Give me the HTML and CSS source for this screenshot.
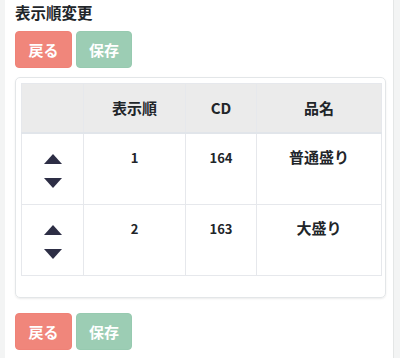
FILE: index.html
```html
<!DOCTYPE html>
<html lang="ja">
<head>
<meta charset="utf-8">
<link rel="stylesheet" href="styles.css">
</head>
<body>
<div class="page">
  <h1 class="title">表示順変更</h1>
  <div class="actions">
    <button class="btn btn-back">戻る</button>
    <button class="btn btn-save">保存</button>
  </div>
  <div class="card">
    <table class="grid">
      <colgroup>
        <col class="c1"><col class="c2"><col class="c3"><col class="c4">
      </colgroup>
      <thead>
        <tr><th></th><th>表示順</th><th>CD</th><th>品名</th></tr>
      </thead>
      <tbody>
        <tr>
          <td class="move"><div class="arrows"><span class="tri up"></span><span class="tri down"></span></div></td>
          <td>1</td><td>164</td><td class="name">普通盛り</td>
        </tr>
        <tr>
          <td class="move"><div class="arrows"><span class="tri up"></span><span class="tri down"></span></div></td>
          <td>2</td><td>163</td><td class="name">大盛り</td>
        </tr>
      </tbody>
    </table>
  </div>
  <div class="actions">
    <button class="btn btn-back">戻る</button>
    <button class="btn btn-save">保存</button>
  </div>
</div>
</body>
</html>
```
FILE: styles.css
```css
html, body {
  margin: 0;
  padding: 0;
  height: 100%;
}
body {
  background: #f3f4f4;
  padding: 0 6px 0 5px;
  box-sizing: border-box;
  font-family: "Noto Sans CJK JP", "Noto Sans", sans-serif;
  color: #212529;
}
.page {
  background: #fff;
  height: 100%;
  box-sizing: border-box;
  border-right: 1px solid #e4e6e6;
  padding: 1px 6px 0 10px;
}
.title {
  font-size: 15.5px;
  line-height: 22px;
  font-weight: 700;
  margin: 0 0 8px 0;
}
.actions {
  display: flex;
  gap: 4px;
}
.btn {
  font-family: inherit;
  font-size: 15px;
  font-weight: 700;
  color: #fff;
  border: 1px solid transparent;
  border-radius: 4px;
  height: 37px;
  padding: 0;
  width: 57px;
}
.btn-save { width: 56px; }
.btn-back { background: #f0867b; border-color: #ef8277; }
.btn-save { background: #9ccdb4; border-color: #97cab0; }
.card {
  margin: 9px 0 15px 0;
  border: 1px solid #e3e6e8;
  border-radius: 5px;
  box-shadow: 0 1px 2px rgba(0,0,0,0.08);
  padding: 5px 4px 21px 5px;
  width: 371px;
  box-sizing: border-box;
}
.grid {
  border-collapse: collapse;
  width: 360px;
  table-layout: fixed;
}
.c1 { width: 62px; }
.c2 { width: 102px; }
.c3 { width: 71px; }
.c4 { width: 125px; }
.grid th, .grid td {
  border: 1px solid #e6e8ec;
  text-align: center;
  vertical-align: top;
  padding: 12px 4px;
  font-weight: 700;
}
.grid th {
  background: #ebebeb;
  font-size: 15px;
  line-height: 24px;
  border-bottom: 2px solid #e1e5ea;
}
.grid td {
  font-size: 13px;
  line-height: 24px;
}
.grid td.name {
  font-size: 15px;
  line-height: 22px;
}
.grid td.move {
  padding: 20px 0 16px 0;
}
.arrows {
  display: flex;
  flex-direction: column;
  align-items: center;
  gap: 14px;
}
.tri {
  width: 0;
  height: 0;
  border-left: 9.5px solid transparent;
  border-right: 9.5px solid transparent;
}
.tri.up { border-bottom: 10px solid #2d2e45; }
.tri.down { border-top: 10px solid #2d2e45; }
```
